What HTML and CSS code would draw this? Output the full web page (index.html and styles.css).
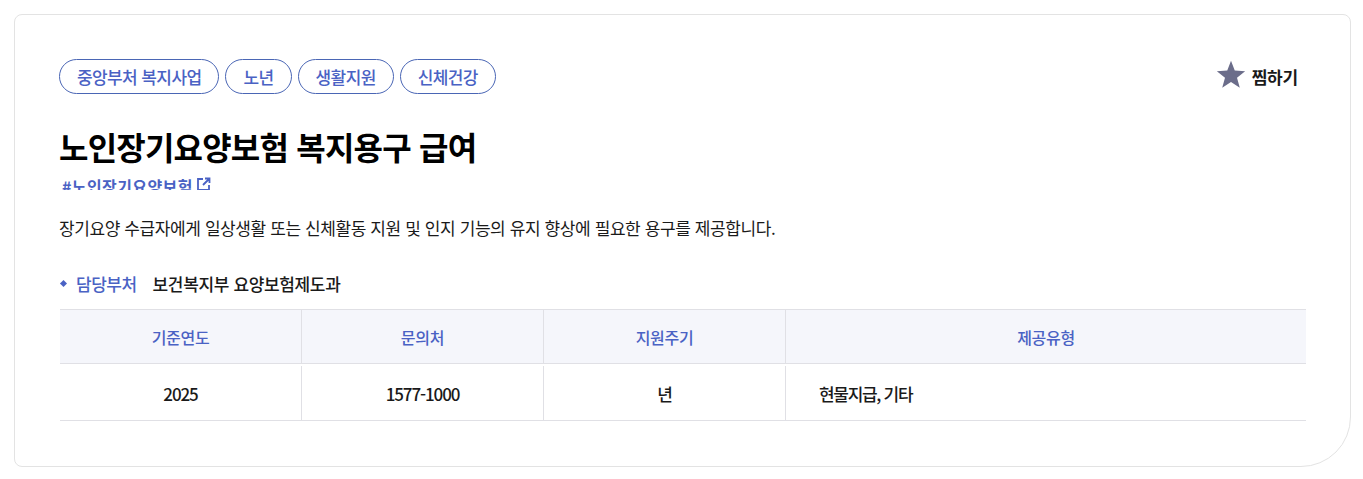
FILE: index.html
```html
<!DOCTYPE html>
<html lang="ko">
<head>
<meta charset="utf-8">
<title>노인장기요양보험 복지용구 급여</title>
<link rel="stylesheet" href="styles.css">
</head>
<body>
<section class="card">
  <div class="top">
    <ul class="tags">
      <li class="tag">중앙부처 복지사업</li>
      <li class="tag">노년</li>
      <li class="tag">생활지원</li>
      <li class="tag">신체건강</li>
    </ul>
    <button class="fav" type="button">
      <svg class="star" viewBox="0 0 28 28" width="30" height="30"><path d="M14 .8l3.5 9.1 9.7.5-7.6 6.1 2.6 9.4L14 20.6l-8.2 5.3 2.6-9.4L.8 10.400l9.700-.5z" fill="#6b6d8a"/></svg>
      <span class="fav-label">찜하기</span>
    </button>
  </div>
  <h1 class="title">노인장기요양보험 복지용구 급여</h1>
  <div class="hash-clip">
    <a class="hash">#노인장기요양보험
      <svg class="ext" viewBox="0 0 14 14" width="14" height="14"><path d="M6 2H1v11h11V8" fill="none" stroke="#4a62c4" stroke-width="1.800"/><path d="M6 8l6-6M8 1.500h4.500V6" fill="none" stroke="#4a62c4" stroke-width="1.800"/></svg>
    </a>
  </div>
  <p class="desc">장기요양 수급자에게 일상생활 또는 신체활동 지원 및 인지 기능의 유지 향상에 필요한 용구를 제공합니다.</p>
  <div class="dept">
    <i class="dot"></i>
    <span class="dept-label">담당부처</span>
    <span class="dept-name">보건복지부 요양보험제도과</span>
  </div>
  <div class="table">
    <div class="row head">
      <div class="cell">기준연도</div>
      <div class="cell">문의처</div>
      <div class="cell">지원주기</div>
      <div class="cell">제공유형</div>
    </div>
    <div class="row body">
      <div class="cell">2025</div>
      <div class="cell">1577-1000</div>
      <div class="cell">년</div>
      <div class="cell left">현물지급, 기타</div>
    </div>
  </div>
</section>
</body>
</html>
```

FILE: styles.css
```css
* { box-sizing: border-box; }
html, body { margin: 0; background: #fff; }
body {
  padding: 14px 12px 12px 14px;
  font-family: "Noto Sans CJK KR", "Noto Sans", sans-serif;
  color: #1a1a1a;
}
.card {
  height: 453px;
  border: 1px solid #e3e3e3;
  border-radius: 8px 8px 50px 8px;
  padding: 44px 44px 0;
  background: #fff;
}
.top { display: flex; justify-content: space-between; align-items: flex-start; }
.tags { display: flex; gap: 6px; list-style: none; margin: 0; padding: 0; }
.tag {
  height: 35px;
  padding: 0 17px;
  border: 1px solid #4a66b5;
  border-radius: 18px;
  color: #4a62c4;
  font-size: 17px;
  font-weight: 500;
  line-height: 33px;
  letter-spacing: -0.6px;
  white-space: nowrap;
}
.fav {
  display: flex;
  align-items: flex-start;
  gap: 5px;
  margin: 1px 8px 0 0;
  padding: 0;
  border: 0;
  background: none;
  font: inherit;
  font-size: 17px;
  font-weight: 700;
  line-height: 30px;
  letter-spacing: -0.2px;
  color: #1a1a1a;
}
.fav-label { margin-top: 2px; }
.star { display: block; margin-right: 1px; }
.title {
  margin: 29px 0 0;
  font-size: 32px;
  font-weight: 700;
  line-height: 46px;
  letter-spacing: -0.8px;
  color: #000;
}
.hash-clip { height: 17px; margin-top: 4px; padding-left: 3px; overflow: hidden; }
.hash {
  display: flex;
  align-items: flex-start;
  gap: 4px;
  color: #4a62c4;
  font-size: 16px;
  font-weight: 700;
  line-height: 26px;
  letter-spacing: 0.4px;
}
.ext { display: block; margin-top: 4px; }
.desc {
  margin: 26px 0 0;
  font-size: 17px;
  line-height: 24px;
  letter-spacing: -0.4px;
  color: #1a1a1a;
}
.dept {
  display: flex;
  align-items: center;
  margin-top: 31px;
  height: 24px;
  font-size: 17px;
  font-weight: 500;
  letter-spacing: -0.5px;
}
.dot {
  width: 5px;
  height: 5px;
  margin: 0 10px 0 2px;
  background: #4a62c4;
  transform: rotate(45deg);
}
.dept-label { color: #4a62c4; margin-right: 16px; }
.dept-name { letter-spacing: -0.35px; }
.table { margin: 14px 0 0 1px; border-top: 1px solid #e0e0e5; }
.row {
  display: grid;
  grid-template-columns: 242px 242px 242px 1fr;
  font-size: 17px;
  letter-spacing: -1.1px;
}
.head { height: 53px; background: #f5f6fb; color: #4a62c4; font-weight: 500; font-size: 16px; letter-spacing: -0.3px; }
.body {
  height: 58px;
  padding-top: 2px;
  border-top: 1px solid #e0e0e5;
  border-bottom: 1px solid #e0e0e5;
  font-weight: 500;
}
.cell {
  display: flex;
  align-items: center;
  justify-content: center;
  border-right: 1px solid #e0e0e5;
}
.cell:last-child { border-right: 0; }
.left { justify-content: flex-start; padding-left: 33px; letter-spacing: -1.3px; }
```
